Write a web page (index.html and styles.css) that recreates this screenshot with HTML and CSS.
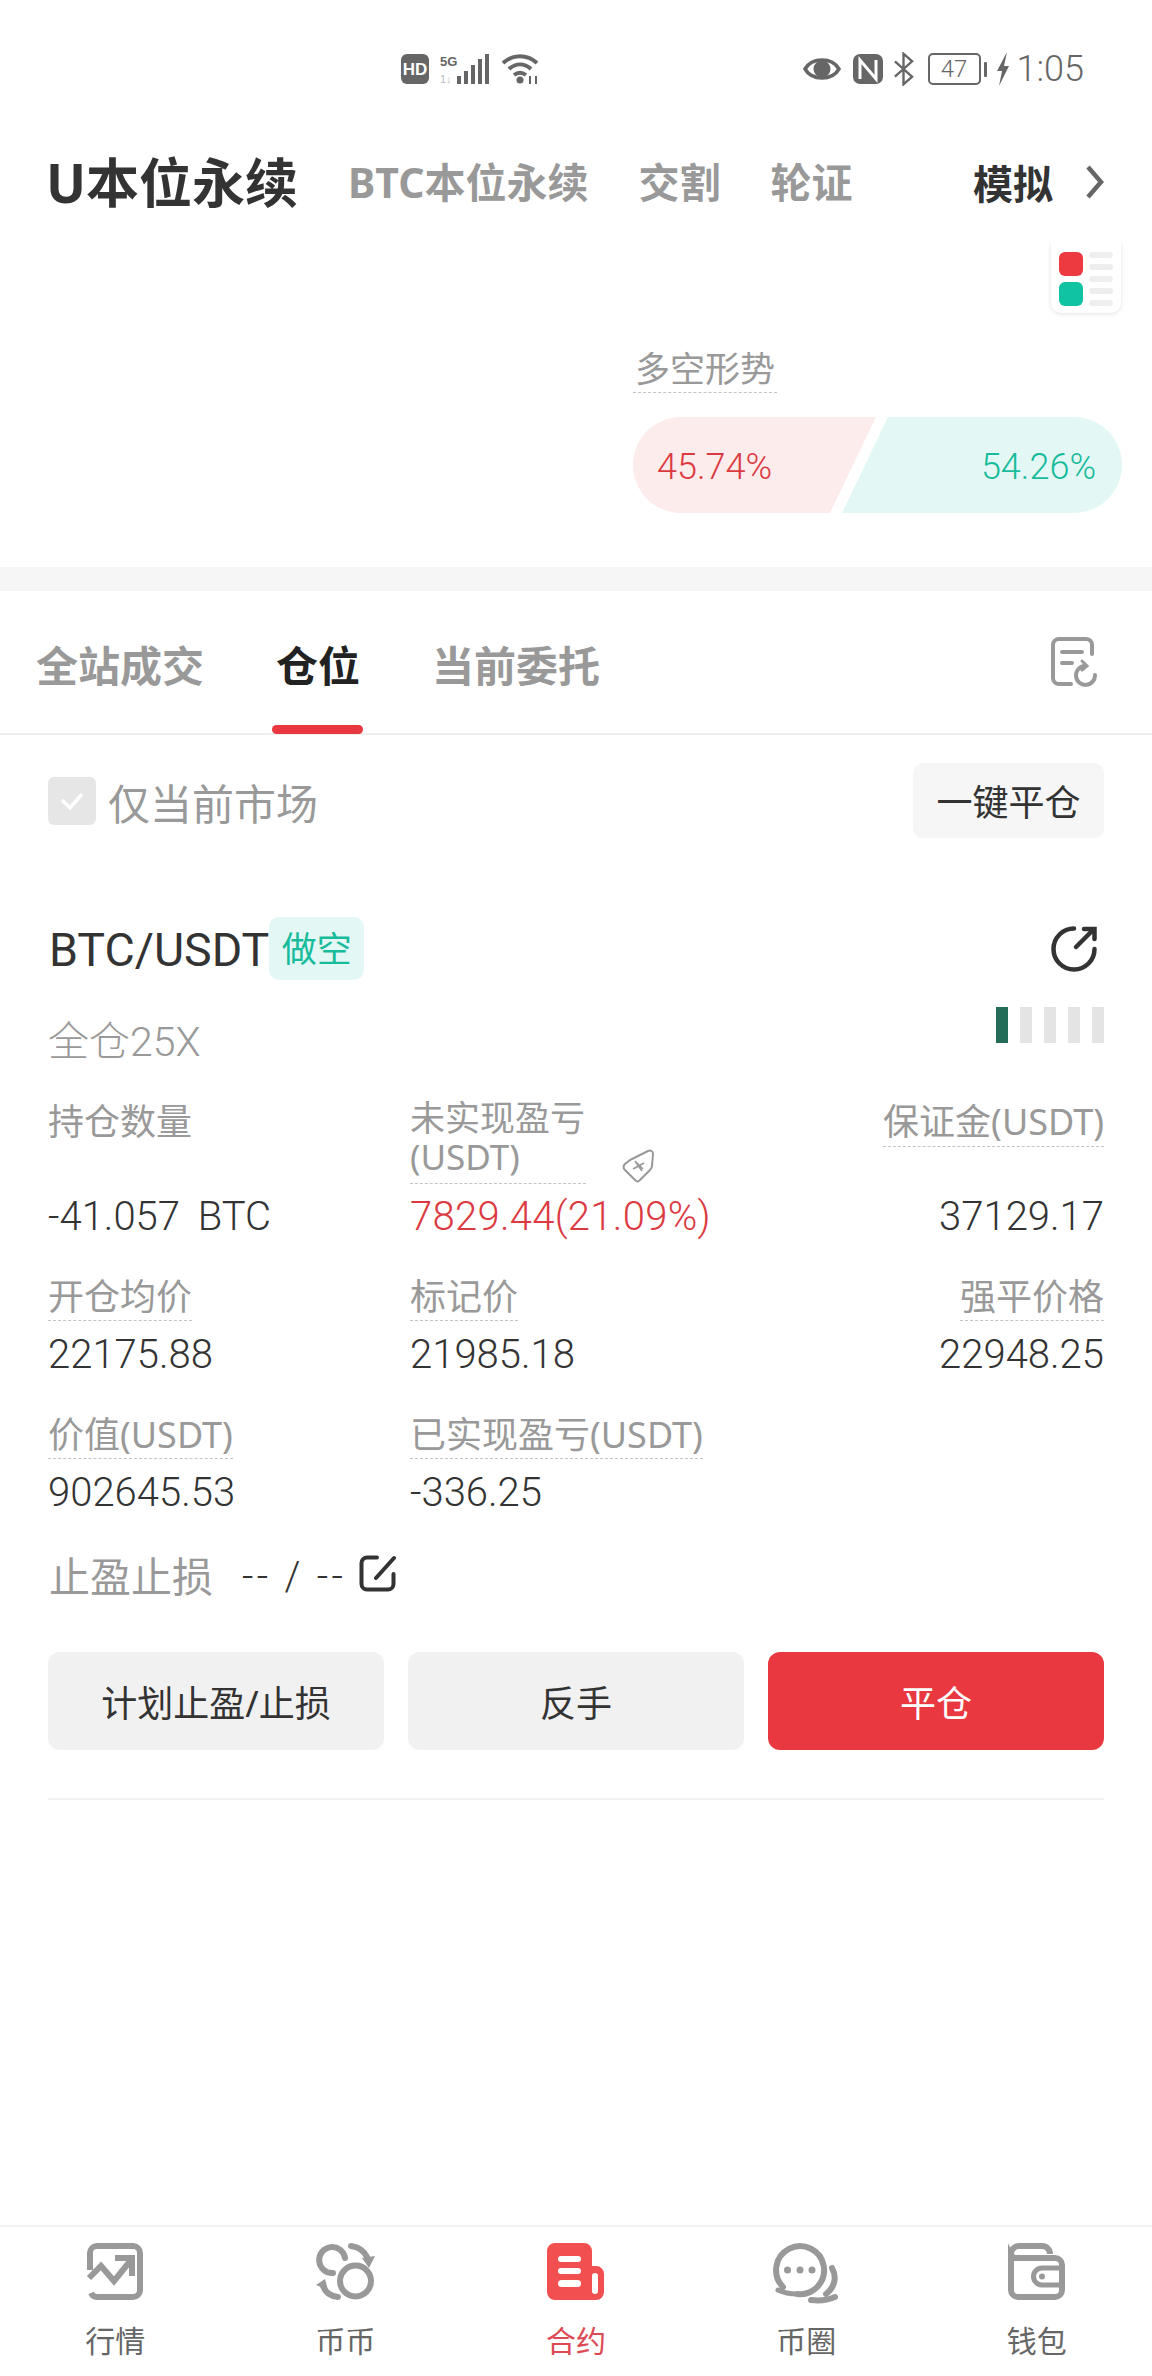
FILE: index.html
```html
<!DOCTYPE html>
<html lang="zh">
  <head>
    <title>合约</title>
    <meta charset="UTF-8" />
    <meta name="viewport" content="width=device-width" />
    <link rel="stylesheet" href="styles.css">
  </head>
  <body>
    <div class="page">
      <!-- status bar -->
      <div class="status">
        <div class="status-left">
          <svg width="30" height="30" viewBox="0 0 30 30"><rect x="1" y="0" width="28" height="30" rx="6" fill="#666"/><text x="15" y="21" text-anchor="middle" class="hd-text">HD</text></svg>
          <svg width="50" height="30" viewBox="0 0 50 30">
            <text x="0" y="12" class="five-g">5G</text>
            <text x="0" y="29" class="four-g">1↓</text>
            <rect x="17" y="22" width="4" height="8" fill="#666"/><rect x="24" y="17" width="4" height="13" fill="#666"/><rect x="31" y="11" width="4" height="19" fill="#666"/><rect x="38" y="5" width="4" height="25" fill="#666"/><rect x="45" y="0" width="4" height="30" fill="#666"/>
          </svg>
          <svg class="wifi" width="40" height="32" viewBox="0 0 40 32" fill="none" stroke="#666" stroke-width="4">
            <path d="M2 10c10-9 24-9 34 0"/><path d="M8 16c7-6 15-6 22 0"/><path d="M13 22c4-3 8-3 12 0"/>
            <circle cx="19" cy="27" r="3.500" fill="#666" stroke="none"/>
            <path d="M29 31v-8M35 23v8" stroke-width="2"/>
          </svg>
        </div>
        <div class="status-right">
          <svg width="38" height="28" viewBox="0 0 38 28"><path d="M2 14C9 2 29 2 36 14 29 26 9 26 2 14z" fill="none" stroke="#666" stroke-width="3.500"/><circle cx="19" cy="14" r="8.500" fill="#666"/></svg>
          <svg class="nfc" width="30" height="30" viewBox="0 0 30 30"><rect x="0" y="0" width="30" height="30" rx="7" fill="#666"/><path d="M7 25V6l16 19V6" fill="none" stroke="#fff" stroke-width="3"/></svg>
          <svg class="bt" width="21" height="34" viewBox="0 0 22 34" fill="none" stroke="#666" stroke-width="2.500"><path d="M2 9l18 16-9 8V1l9 8L2 25"/></svg>
          <div class="battery"><span class="battery-num">47</span></div>
          <span class="battery-tip"></span>
          <svg class="bolt" width="14" height="34" viewBox="0 0 14 34"><path d="M11 0L1 19h5L3 34l10-20H8z" fill="#666"/></svg>
          <span class="clock">1:05</span>
        </div>
      </div>

      <!-- market tabs -->
      <div class="market-tabs">
        <span class="market-tab market-active">U本位永续</span>
        <span class="market-tab">BTC本位永续</span>
        <span class="market-tab">交割</span>
        <span class="market-tab">轮证</span>
        <span class="market-sim">模拟</span>
        <svg width="20" height="34" viewBox="0 0 20 34" fill="none" stroke="#666" stroke-width="4.500"><path d="M3 2l13 15L3 32"/></svg>
      </div>

      <!-- long/short panel -->
      <div class="trend">
        <div class="layout-btn">
          <div class="layout-col">
            <span class="layout-red"></span>
            <span class="layout-green"></span>
          </div>
          <div class="layout-lines"><i></i><i></i><i></i><i></i><i></i></div>
        </div>
        <div class="trend-box">
          <span class="trend-title dashed">多空形势</span>
          <div class="trend-bar">
            <div class="trend-long">45.74%</div>
            <div class="trend-short">54.26%</div>
          </div>
        </div>
      </div>
      <div class="divider"></div>

      <!-- position tabs -->
      <div class="pos-tabs">
        <span class="pos-tab">全站成交</span>
        <span class="pos-tab pos-active">仓位</span>
        <span class="pos-tab">当前委托</span>
        <svg class="pos-icon" width="48" height="50" viewBox="0 0 48 50" fill="none" stroke="#999" stroke-width="4" stroke-linecap="round">
          <path d="M41 17V8a6 6 0 0 0-6-6H8a6 6 0 0 0-6 6v33a6 6 0 0 0 6 6h12"/>
          <path d="M11 15h20M11 26h10"/>
          <path d="M33 29a9.500 9.500 0 1 0 11 9"/>
          <path d="M31 24l5 5-5 4" stroke-width="3"/>
        </svg>
      </div>

      <div class="filter">
        <label class="only-current">
          <span class="check">
            <svg width="26" height="20" viewBox="0 0 26 20" fill="none" stroke="#fff" stroke-width="3.500"><path d="M3 9l8 8L23 3"/></svg>
          </span>
          <span class="only-text">仅当前市场</span>
        </label>
        <button class="close-all">一键平仓</button>
      </div>

      <!-- position card -->
      <div class="card">
        <div class="card-head">
          <span class="symbol">BTC/USDT</span>
          <span class="side">做空</span>
          <svg class="share" width="46" height="46" viewBox="0 0 46 46" fill="none" stroke="#333" stroke-width="4.500" stroke-linecap="round">
            <path d="M23 2.500A20.500 20.500 0 1 0 43.500 23"/>
            <path d="M25 21L42 4M33 3h10.500v10"/>
          </svg>
        </div>
        <div class="card-sub">
          <span class="margin-mode">全仓25X</span>
          <div class="risk"><i class="risk-on"></i><i></i><i></i><i></i><i></i></div>
        </div>

        <div class="stats">
          <div class="stat stat-first">
            <div class="stat-label"><span>持仓数量</span></div>
            <div class="stat-value stat-qty">-41.057 BTC</div>
          </div>
          <div class="stat stat-first">
            <div class="stat-label stat-wrap">
              <span class="dashed wrap-text">未实现盈亏<br>(USDT)</span>
              <svg class="tag" width="33" height="34" viewBox="0 0 33 34" fill="none" stroke="#999" stroke-width="2">
                <path d="M8 11L26 2c3-1 5 0 5 3l-1 12c0 2-1 3-2 4L18 31c-2 2-3 2-5 0L3 21c-2-2-2-4 0-6z"/>
                <path d="M11 20l11-6M13 12l7 10M21 20l-7-7" stroke-width="1.600"/>
              </svg>
            </div>
            <div class="stat-value stat-red">7829.44(21.09%)</div>
          </div>
          <div class="stat stat-first stat-right">
            <div class="stat-label"><span class="dashed">保证金(USDT)</span></div>
            <div class="stat-value">37129.17</div>
          </div>

          <div class="stat">
            <div class="stat-label"><span class="dashed">开仓均价</span></div>
            <div class="stat-value">22175.88</div>
          </div>
          <div class="stat">
            <div class="stat-label"><span class="dashed">标记价</span></div>
            <div class="stat-value">21985.18</div>
          </div>
          <div class="stat stat-right">
            <div class="stat-label"><span class="dashed">强平价格</span></div>
            <div class="stat-value">22948.25</div>
          </div>

          <div class="stat">
            <div class="stat-label"><span class="dashed">价值(USDT)</span></div>
            <div class="stat-value">902645.53</div>
          </div>
          <div class="stat">
            <div class="stat-label"><span class="dashed">已实现盈亏(USDT)</span></div>
            <div class="stat-value">-336.25</div>
          </div>
        </div>

        <div class="tpsl">
          <span class="tpsl-label">止盈止损</span>
          <span class="tpsl-value">-- / --</span>
          <svg width="37" height="37" viewBox="0 0 37 37" fill="none" stroke="#333" stroke-width="4" stroke-linecap="round"><path d="M18 2.500H8a5.500 5.500 0 0 0-5.500 5.500v21A5.500 5.500 0 0 0 8 34.500h21a5.500 5.500 0 0 0 5.500-5.500V19"/><path d="M17 23L35 3"/></svg>
        </div>

        <div class="actions">
          <button class="action">计划止盈/止损</button>
          <button class="action">反手</button>
          <button class="action action-red">平仓</button>
        </div>
      </div>

      <!-- bottom nav -->
      <nav class="bottom-nav">
        <div class="nav-item">
          <svg width="56" height="57" viewBox="0 0 56 57" fill="none" stroke="#999" stroke-width="6">
            <path d="M3 27V10a7 7 0 0 1 7-7h36a7 7 0 0 1 7 7v37a7 7 0 0 1-7 7H10a7 7 0 0 1-6-4"/>
            <path d="M2 35l12-12 13 15 17-21"/>
            <path d="M28 15h17v18"/>
          </svg>
          <span>行情</span>
        </div>
        <div class="nav-item">
          <svg width="59" height="57" viewBox="0 0 59 57" fill="none" stroke="#999" stroke-width="6" stroke-linecap="round">
            <circle cx="39.500" cy="38" r="15.500"/>
            <path d="M29 15A13 13 0 1 0 17 30"/>
            <path d="M35 3c7 1 13 5 16 11"/>
            <path d="M46 15l13-2-6 12z" fill="#999" stroke="none"/>
            <path d="M22 54C14 53 9 49 7 43"/>
            <path d="M0 42l9-6 3 11z" fill="#999" stroke="none"/>
          </svg>
          <span>币币</span>
        </div>
        <div class="nav-item nav-active">
          <svg width="57" height="57" viewBox="0 0 57 57">
            <path d="M8 0h29a8 8 0 0 1 8 8v15h4a8 8 0 0 1 8 8v18a8 8 0 0 1-8 8H8a8 8 0 0 1-8-8V8a8 8 0 0 1 8-8z" fill="#f25050"/>
            <rect x="11" y="13" width="23" height="6" rx="3" fill="#fff"/>
            <rect x="11" y="25" width="23" height="6" rx="3" fill="#fff"/>
            <rect x="11" y="37" width="23" height="7" rx="3.500" fill="#fff"/>
            <rect x="45" y="30" width="6" height="21" rx="3" fill="#fff"/>
          </svg>
          <span>合约</span>
        </div>
        <div class="nav-item">
          <svg width="67" height="57" viewBox="0 0 67 57" fill="none" stroke="#999" stroke-width="6" stroke-linecap="round">
            <path d="M10 44A24 24 0 1 1 24.500 51"/>
            <path d="M5 47c6 3 13 4 19 4" stroke-width="5"/>
            <circle cx="14.500" cy="27" r="3.500" fill="#999" stroke="none"/>
            <circle cx="27" cy="27" r="3.500" fill="#999" stroke="none"/>
            <circle cx="39" cy="27" r="3.500" fill="#999" stroke="none"/>
            <path d="M59 25c5 9 3 19-6 26"/>
            <path d="M38 57c8 1 17 0 24-3" stroke-width="6"/>
          </svg>
          <span>币圈</span>
        </div>
        <div class="nav-item">
          <svg width="57" height="57" viewBox="0 0 57 57" fill="none" stroke="#999" stroke-width="6">
            <path d="M3 15v-4a8 8 0 0 1 8-8h23a8 8 0 0 1 8 8"/>
            <path d="M3 12a6 6 0 0 0 6 3h38a7 7 0 0 1 7 7v25a7 7 0 0 1-7 7H10a7 7 0 0 1-7-7z"/>
            <path d="M54 25H34a8.500 8.500 0 0 0 0 17h20" stroke-width="5"/>
            <circle cx="34" cy="33.500" r="3" fill="#999" stroke="none"/>
          </svg>
          <span>钱包</span>
        </div>
      </nav>
    </div>
  </body>
</html>
```

FILE: styles.css
```css
* {
  box-sizing: border-box;
}

body {
  margin: 0;
  background-color: #fff;
  color: #333;
  font-family: "Noto Sans", "Noto Sans CJK SC", sans-serif;
}

.page {
  width: 1152px;
  height: 2376px;
  display: flex;
  flex-direction: column;
  overflow: hidden;
}

/* status bar */
.status {
  height: 134px;
  padding: 50px 68px 0 400px;
  display: flex;
  justify-content: space-between;
  align-items: flex-start;
  flex-shrink: 0;
}

.status-left {
  display: flex;
  align-items: center;
  gap: 10px;
  margin-top: 3px;
}

.wifi {
  margin-left: 1px;
}

.hd-text {
  font-size: 17px;
  font-weight: 700;
  fill: #fff;
  font-family: "Liberation Sans", sans-serif;
}

.five-g {
  font-size: 13px;
  font-weight: 700;
  fill: #666;
  font-family: "Liberation Sans", sans-serif;
}

.four-g {
  font-size: 11px;
  fill: #bbb;
  font-family: "Liberation Sans", sans-serif;
}

.status-right {
  display: flex;
  align-items: center;
  height: 34px;
  margin-top: 2px;
}

.nfc {
  margin-left: 12px;
}

.bt {
  margin-left: 10px;
}

.battery {
  width: 53px;
  height: 32px;
  margin-left: 14px;
  border: 2px solid #666;
  border-radius: 5px;
  text-align: center;
}

.battery-num {
  display: block;
  font-size: 24px;
  line-height: 28px;
  color: #666;
  font-family: "Roboto", sans-serif;
  font-weight: 300;
}

.battery-tip {
  width: 3px;
  height: 15px;
  margin-left: 3px;
  background-color: #666;
  border-radius: 1px;
}

.bolt {
  margin-left: 9px;
}

.clock {
  margin-left: 7px;
  font-family: "Roboto", sans-serif;
  font-size: 36px;
  line-height: 34px;
  font-weight: 300;
  color: #666;
}

/* market tabs */
.market-tabs {
  height: 96px;
  padding: 0 47px 0 46px;
  display: flex;
  align-items: center;
  flex-shrink: 0;
}

.market-tab {
  font-size: 41px;
  font-weight: 700;
  color: #999;
  margin-right: 50px;
  line-height: 1;
}

.market-active {
  font-size: 53px;
  color: #333;
}

.market-sim {
  font-size: 40px;
  font-weight: 700;
  color: #333;
  margin-left: auto;
  margin-right: 32px;
}

/* long/short panel */
.trend {
  height: 337px;
  padding-right: 30px;
  position: relative;
  display: flex;
  justify-content: flex-end;
  flex-shrink: 0;
}

.layout-btn {
  position: absolute;
  top: 12px;
  right: 31px;
  width: 70px;
  height: 71px;
  padding: 10px 8px 0;
  border-radius: 0 0 10px 10px;
  box-shadow: 0 1px 4px rgba(0, 0, 0, 0.12);
  display: flex;
  gap: 6px;
  clip-path: inset(0 -6px -6px -6px);
}

.layout-col {
  display: flex;
  flex-direction: column;
  gap: 6px;
}

.layout-red,
.layout-green {
  width: 24px;
  height: 24px;
  border-radius: 6px;
  background-color: #ec3a40;
}

.layout-green {
  background-color: #10c3a3;
}

.layout-lines {
  flex: 1;
  display: flex;
  flex-direction: column;
  gap: 6px;
}

.layout-lines i {
  height: 6px;
  background-color: #eee;
  border-radius: 3px;
}

.trend-box {
  margin-top: 116px;
  width: 489px;
}

.trend-title {
  display: inline-block;
  font-size: 35px;
  line-height: 46px;
  color: #999;
  padding: 0 2px;
}

.dashed {
  border-bottom: 1px dashed #c4c4c4;
}

.trend-bar {
  margin-top: 24px;
  height: 96px;
  display: flex;
}

.trend-long,
.trend-short {
  height: 96px;
  line-height: 101px;
  font-size: 36px;
  font-family: "Roboto", sans-serif;
  font-weight: 300;
}

.trend-long {
  width: 243px;
  background-color: #fcecec;
  color: #dc3a42;
  padding-left: 24px;
  border-radius: 48px 0 0 48px;
  clip-path: polygon(0 0, 100% 0, 197px 100%, 0 100%);
}

.trend-short {
  width: 280px;
  margin-left: -34px;
  background-color: #e3f8f5;
  color: #18bb9c;
  text-align: right;
  padding-right: 26px;
  border-radius: 0 48px 48px 0;
  clip-path: polygon(46px 0, 100% 0, 100% 100%, 0 100%);
}

.divider {
  height: 24px;
  background-color: #f6f6f6;
  flex-shrink: 0;
}

/* position tabs */
.pos-tabs {
  height: 144px;
  padding: 8px 53px 0 36px;
  display: flex;
  align-items: center;
  border-bottom: 2px solid #eee;
  gap: 72px;
  flex-shrink: 0;
}

.pos-tab {
  font-size: 42px;
  line-height: 56px;
  font-weight: 700;
  color: #999;
  position: relative;
}

.pos-active {
  color: #222;
}

.pos-active::after {
  content: "";
  position: absolute;
  left: -4px;
  right: -3px;
  bottom: -40px;
  height: 9px;
  border-radius: 5px;
  background-color: #e9383f;
}

.pos-icon {
  margin-left: auto;
  margin-bottom: 8px;
}

/* filter row */
.filter {
  height: 103px;
  padding: 28px 48px 0;
  display: flex;
  align-items: center;
  justify-content: space-between;
  flex-shrink: 0;
}

.only-current {
  display: flex;
  align-items: center;
  gap: 12px;
  font-size: 42px;
  color: #999;
}

.only-text {
  line-height: 50px;
  padding-top: 6px;
}

.check {
  width: 48px;
  height: 48px;
  border-radius: 6px;
  background-color: #e6e6e6;
  display: flex;
  align-items: center;
  justify-content: center;
}

.close-all {
  width: 191px;
  height: 75px;
  border: none;
  border-radius: 10px;
  background-color: #f6f6f6;
  color: #333;
  font-family: inherit;
  font-size: 36px;
  padding: 0;
}

/* card */
.card {
  margin: 79px 48px 0;
  padding-bottom: 48px;
  border-bottom: 2px solid #f1f1f1;
  flex-shrink: 0;
}

.card-head {
  display: flex;
  align-items: center;
  height: 63px;
}

.symbol {
  margin-left: 1px;
  padding-top: 3px;
  font-family: "Roboto", sans-serif;
  font-size: 46.500px;
  color: #333;
}

.side {
  width: 95px;
  height: 63px;
  line-height: 63px;
  text-align: center;
  font-size: 35px;
  color: #18bb9c;
  background-color: #e3f8f5;
  border-radius: 10px;
}

.share {
  margin-left: auto;
  margin-right: 7px;
}

.card-sub {
  margin-top: 27px;
  height: 62px;
  display: flex;
  justify-content: space-between;
  align-items: flex-start;
}

.margin-mode {
  margin-top: 7px;
  font-size: 41px;
  line-height: 56px;
  color: #999;
  font-family: "Roboto", "Noto Sans CJK SC", sans-serif;
  font-weight: 300;
}

.risk {
  display: flex;
  gap: 12px;
}

.risk i {
  width: 12px;
  height: 36px;
  background-color: #e4e4e4;
}

.risk .risk-on {
  background-color: #246b58;
}

.stats {
  margin-top: 32px;
  display: grid;
  grid-template-columns: 362px 300px 1fr;
  row-gap: 4px;
}

.stat {
  height: 134px;
}

.stat-first {
  height: 171px;
}

.stat-right {
  text-align: right;
}

.stat-label {
  font-size: 36px;
  line-height: 42px;
  color: #999;
  margin-bottom: 10px;
}

.stat-first .stat-label {
  height: 92px;
  margin-bottom: 0;
}

.stat-label span {
  display: inline-block;
  padding-bottom: 2px;
}

.stat-first .stat-label span {
  margin-top: -1px;
  padding-bottom: 3px;
}

.stat-wrap {
  position: relative;
}

.stat-first .stat-wrap .wrap-text {
  width: 176px;
  margin-top: -3px;
  padding-bottom: 7px;
  line-height: 39px;
  font-size: 35px;
}

.tag {
  position: absolute;
  left: 212px;
  top: 48px;
}

.stat-value {
  font-family: "Roboto", sans-serif;
  font-size: 40px;
  line-height: 48px;
  font-weight: 300;
  color: #333;
}

.stat-qty {
  word-spacing: 8px;
}

.stat-red {
  color: #dc3a42;
  letter-spacing: 0.3px;
}

.tpsl {
  height: 56px;
  display: flex;
  align-items: center;
}

.tpsl svg {
  margin-top: -6px;
  margin-left: 2px;
}

.tpsl-label {
  margin-left: 1px;
  font-size: 41px;
  line-height: 56px;
  color: #999;
}

.tpsl-value {
  margin-left: 29px;
  margin-right: 11px;
  font-family: "Roboto", sans-serif;
  font-size: 40px;
  font-weight: 300;
  letter-spacing: 3.300px;
  color: #333;
}

.actions {
  margin-top: 48px;
  display: flex;
  gap: 24px;
}

.action {
  flex: 1;
  height: 98px;
  border: none;
  border-radius: 12px;
  background-color: #f1f1f1;
  color: #333;
  font-family: inherit;
  font-size: 36px;
  padding: 0;
}

.action-red {
  background-color: #e9383f;
  color: #fff;
}

/* bottom nav */
.bottom-nav {
  margin-top: auto;
  height: 151px;
  border-top: 2px solid #f2f2f2;
  display: flex;
  justify-content: space-around;
  padding-top: 16px;
  flex-shrink: 0;
}

.nav-item {
  width: 230px;
  display: flex;
  flex-direction: column;
  align-items: center;
  gap: 21px;
  font-size: 30px;
  line-height: 40px;
  color: #666;
}

.nav-item svg {
  display: block;
  overflow: visible;
}

.nav-active {
  color: #dc4a55;
}
```
